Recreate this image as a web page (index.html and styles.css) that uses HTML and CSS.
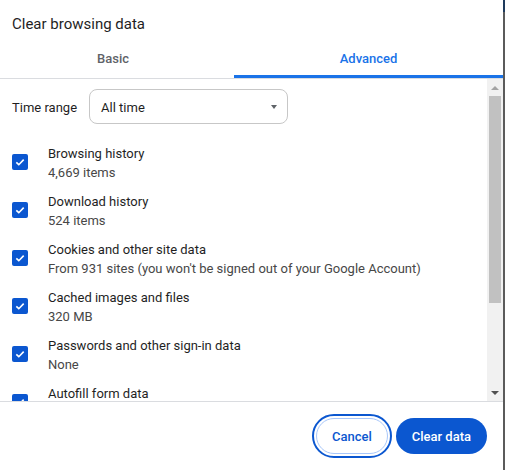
FILE: index.html
```html
<!DOCTYPE html>
<html lang="en">
<head>
    <meta charset="UTF-8">
    <meta name="viewport" content="width=device-width, initial-scale=1.0">
    <title>Clear browsing data</title>
    <link rel="stylesheet" href="styles.css">
</head>
<body>
    <div class="screen">
        <div class="dialog">
            <h1 class="title">Clear browsing data</h1>

            <div class="tabs">
                <div class="tab tab-basic">Basic</div>
                <div class="tab active">Advanced</div>
            </div>

            <div class="dialog-body">
                <div class="content">
                    <div class="range-row">
                        <span class="range-label">Time range</span>
                        <div class="select">
                            <span>All time</span>
                            <span class="select-arrow"></span>
                        </div>
                    </div>

                    <div class="item">
                        <span class="checkbox"><svg viewBox="0 0 16 16" width="16" height="16"><path d="M4.3 8.3 L6.8 10.7 L11.7 5.6" fill="none" stroke="#fff" stroke-width="1.6"/></svg></span>
                        <div class="item-text">
                            <div class="item-name">Browsing history</div>
                            <div class="item-sub">4,669 items</div>
                        </div>
                    </div>
                    <div class="item">
                        <span class="checkbox"><svg viewBox="0 0 16 16" width="16" height="16"><path d="M4.3 8.3 L6.8 10.7 L11.7 5.6" fill="none" stroke="#fff" stroke-width="1.6"/></svg></span>
                        <div class="item-text">
                            <div class="item-name">Download history</div>
                            <div class="item-sub">524 items</div>
                        </div>
                    </div>
                    <div class="item">
                        <span class="checkbox"><svg viewBox="0 0 16 16" width="16" height="16"><path d="M4.3 8.3 L6.8 10.7 L11.7 5.6" fill="none" stroke="#fff" stroke-width="1.6"/></svg></span>
                        <div class="item-text">
                            <div class="item-name">Cookies and other site data</div>
                            <div class="item-sub">From 931 sites (you won't be signed out of your Google Account)</div>
                        </div>
                    </div>
                    <div class="item">
                        <span class="checkbox"><svg viewBox="0 0 16 16" width="16" height="16"><path d="M4.3 8.3 L6.8 10.7 L11.7 5.6" fill="none" stroke="#fff" stroke-width="1.6"/></svg></span>
                        <div class="item-text">
                            <div class="item-name">Cached images and files</div>
                            <div class="item-sub">320 MB</div>
                        </div>
                    </div>
                    <div class="item">
                        <span class="checkbox"><svg viewBox="0 0 16 16" width="16" height="16"><path d="M4.3 8.3 L6.8 10.7 L11.7 5.6" fill="none" stroke="#fff" stroke-width="1.6"/></svg></span>
                        <div class="item-text">
                            <div class="item-name">Passwords and other sign-in data</div>
                            <div class="item-sub">None</div>
                        </div>
                    </div>
                    <div class="item">
                        <span class="checkbox"><svg viewBox="0 0 16 16" width="16" height="16"><path d="M4.3 8.3 L6.8 10.7 L11.7 5.6" fill="none" stroke="#fff" stroke-width="1.6"/></svg></span>
                        <div class="item-text">
                            <div class="item-name">Autofill form data</div>
                        </div>
                    </div>
                </div>

                <div class="scrollbar">
                    <div class="sb-btn"><span class="sb-up"></span></div>
                    <div class="sb-track"><div class="sb-thumb"></div></div>
                    <div class="sb-btn"><span class="sb-down"></span></div>
                </div>
            </div>

            <div class="footer">
                <button class="btn btn-cancel">Cancel</button>
                <button class="btn btn-primary">Clear data</button>
            </div>
        </div>
        <div class="edge"></div>
    </div>
</body>
</html>
```

FILE: styles.css
```css
body {
    margin: 0;
    font-family: Roboto, "Liberation Sans", sans-serif;
    font-size: 13px;
    color: #1f1f1f;
    background: #fff;
}
.screen {
    display: flex;
    height: 470px;
    overflow: hidden;
}
.dialog {
    width: 503px;
    display: flex;
    flex-direction: column;
    background: #fff;
}
.edge {
    width: 2px;
    background: linear-gradient(#1e3a5c 0, #1e3a5c 12px, #5b5b5b 12px);
}
.title {
    margin: 0;
    box-sizing: border-box;
    height: 44px;
    line-height: 44px;
    padding: 2px 0 0 12px;
    font-size: 15px;
    font-weight: normal;
}
.tabs {
    display: flex;
    height: 34px;
    border-bottom: 1px solid #dadce0;
}
.tab {
    flex: 1;
    box-sizing: border-box;
    height: 34px;
    line-height: 30px;
    text-align: center;
    font-weight: 500;
    color: #5f6368;
}
.tab-basic {
    flex: 0 0 234px;
    padding-right: 8px;
}
.tab.active {
    color: #1a73e8;
    border-bottom: 3px solid #1a73e8;
}
.dialog-body {
    display: flex;
    height: 322px;
}
.content {
    flex: 1;
    overflow: hidden;
    padding-left: 12px;
}
.range-row {
    display: flex;
    align-items: center;
    gap: 12px;
    margin-top: 10px;
}
.range-label {
    padding-top: 1px;
}
.select {
    width: 199px;
    height: 35px;
    box-sizing: border-box;
    border: 1px solid #c7c7c7;
    border-radius: 8px;
    display: flex;
    align-items: center;
    justify-content: space-between;
    padding: 1px 10px 0 11px;
}
.select-arrow {
    width: 0;
    height: 0;
    border-left: 3.5px solid transparent;
    border-right: 3.5px solid transparent;
    border-top: 4px solid #5f6368;
}
.item {
    display: flex;
    align-items: center;
    gap: 20px;
    padding: 4px 0;
}
.range-row + .item {
    margin-top: 14px;
}
.checkbox {
    width: 16px;
    height: 16px;
    border-radius: 2px;
    background: #0b57d0;
    display: flex;
}
.item-text {
    line-height: 19px;
    min-height: 38px;
    padding-top: 2px;
}
.item-sub {
    color: #474747;
}
.scrollbar {
    width: 16px;
    background: #f1f1f1;
    display: flex;
    flex-direction: column;
}
.sb-btn {
    height: 17px;
    display: flex;
    align-items: center;
    justify-content: center;
}
.sb-up {
    border-left: 4px solid transparent;
    border-right: 4px solid transparent;
    border-bottom: 4px solid #a3a3a3;
}
.sb-down {
    border-left: 4px solid transparent;
    border-right: 4px solid transparent;
    border-top: 4px solid #505050;
}
.sb-track {
    flex: 1;
    padding: 0 2px;
}
.sb-thumb {
    height: 207px;
    background: #c1c1c1;
}
.footer {
    flex: 1;
    border-top: 1px solid #dadce0;
    display: flex;
    justify-content: flex-end;
    align-items: center;
    gap: 8px;
    padding-right: 16px;
}
.btn {
    height: 36px;
    border-radius: 18px;
    font-family: inherit;
    font-size: 13px;
    font-weight: 500;
    padding: 0 16px;
    cursor: pointer;
}
.btn-cancel {
    background: #fff;
    color: #0b57d0;
    border: 1px solid #a8c7fa;
    outline: 2px solid #0b57d0;
    outline-offset: 2px;
    padding: 0 15px;
}
.btn-primary {
    background: #0b57d0;
    color: #fff;
    border: none;
}
```
